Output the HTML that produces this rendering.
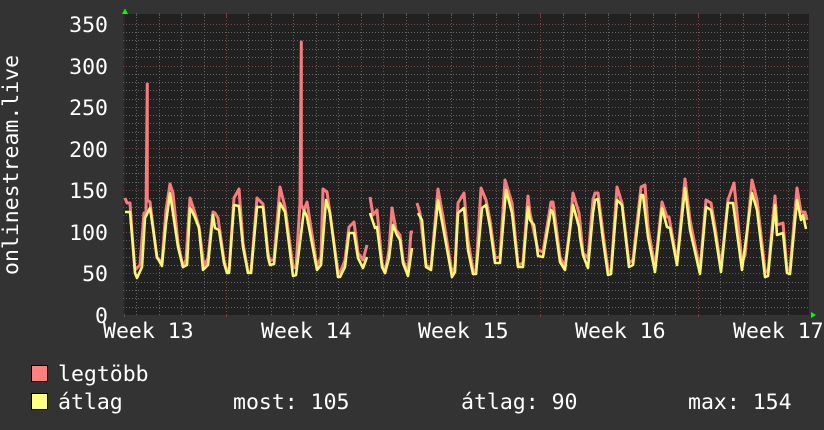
<!DOCTYPE html>
<html><head><meta charset="utf-8">
<style>
html,body{margin:0;padding:0;background:#333;width:824px;height:430px;overflow:hidden}
svg{display:block}
text{font-family:"DejaVu Sans Mono","Liberation Mono",monospace;font-size:21.5px;fill:#fff}
</style></head>
<body>
<svg width="824" height="430" viewBox="0 0 824 430" xmlns="http://www.w3.org/2000/svg">
<rect width="824" height="430" fill="#333"/>
<rect x="123" y="14" width="686" height="301" fill="#212121"/>
<rect x="123" y="14" width="2" height="301" fill="#2a2a2a"/>
<path fill="none" stroke="#646464" stroke-width="1" stroke-dasharray="1 2" d="M136.5 14V315M159.5 14V315M181.5 14V315M204.5 14V315M248.5 14V315M271.5 14V315M293.5 14V315M316.5 14V315M338.5 14V315M361.5 14V315M406.5 14V315M428.5 14V315M451.5 14V315M473.5 14V315M496.5 14V315M518.5 14V315M563.5 14V315M585.5 14V315M608.5 14V315M630.5 14V315M653.5 14V315M675.5 14V315M720.5 14V315M743.5 14V315M765.5 14V315M788.5 14V315"/>
<path fill="none" stroke="#646464" stroke-width="1" stroke-dasharray="1 2" d="M123 307.5H809M123 298.5H809M123 290.5H809M123 282.5H809M123 265.5H809M123 257.5H809M123 248.5H809M123 240.5H809M123 223.5H809M123 215.5H809M123 207.5H809M123 198.5H809M123 182.5H809M123 173.5H809M123 165.5H809M123 157.5H809M123 140.5H809M123 132.5H809M123 123.5H809M123 115.5H809M123 99.5H809M123 90.5H809M123 82.5H809M123 74.5H809M123 57.5H809M123 49.5H809M123 40.5H809M123 32.5H809"/>
<path fill="none" stroke="#7c4646" stroke-width="1" stroke-dasharray="1 2" d="M226.5 14V315M383.5 14V315M540.5 14V315M698.5 14V315M123 273.5H809M123 232.5H809M123 190.5H809M123 148.5H809M123 107.5H809M123 66.5H809M123 24.5H809"/>
<path fill="none" stroke="#555" d="M136.5 13V16M159.5 13V16M181.5 13V16M204.5 13V16M248.5 13V16M271.5 13V16M293.5 13V16M316.5 13V16M338.5 13V16M361.5 13V16M406.5 13V16M428.5 13V16M451.5 13V16M473.5 13V16M496.5 13V16M518.5 13V16M563.5 13V16M585.5 13V16M608.5 13V16M630.5 13V16M653.5 13V16M675.5 13V16M720.5 13V16M743.5 13V16M765.5 13V16M788.5 13V16M124.5 314V317"/>
<path fill="none" stroke="#7a3c3c" d="M226.5 13V17M383.5 13V17M540.5 13V17M698.5 13V17M226.5 314V317M383.5 314V317M540.5 314V317M698.5 314V317"/>

<g fill="none" stroke="#f97c7c" stroke-width="3" stroke-linejoin="round" stroke-linecap="butt">
<polyline points="125,198 127,203 130,203 132.5,240 135,270 140,265 144,213 146,213 147.3,84 147.3,200 150,202 153,227 157,258 162,262 166,210 170,184 173,193 178,243 183,267 186,260 190,198 194,210 199,227 204,267 208,258 213,212 215,213 218,218 224,260 227,272 229,272 234,198 239,189 243,243 248,272 251,272 257,198 263,204 268,253 270,261 274,259 280,187 285,207 293,267 296,268 300,203 301.3,42 301.3,205 304,210 307,202 317,267 321,257 323,189 327,192 338,272 340,273 345,260 349,227 354,222 358,253 363,260 367,245"/>
<polyline points="370,197 373,215 377,210 382,263 385,273 389,250 392,208 396,230 400,235 403,260 408,273 411,232 413,232"/>
<polyline points="417,203 420,213 426,265 431,268 438,189 443,217 452,273 455,267 458,203 464,193 468,240 473,270 476,272 481,188 486,200 490,220 495,258 500,257 505,180 512,203 518,265 523,263 528,196 530,213 534,232 538,250 543,252 551,202 553,202 560,257 565,267 570,227 573,193 579,213 580,222 583,253 588,258 593,200 595,193 598,193 603,233 608,270 611,272 617,187 622,203 629,263 633,260 641,187 645,185 648,227 655,268 662,202 667,217 669,217 677,262 685,179 690,220 700,270 706,200 711,203 715,227 721,268 728,200 734,183 742,263 745,255 752,180 757,200 765,270 768,273 775,196 777,225 783,223 787,270 790,270 797,188 801,212 805,212 807,220"/>
</g>
<g fill="none" stroke="#f8f878" stroke-width="2.6" stroke-linejoin="round">
<polyline points="125,212 130,212 132.7,243 135,273 137,278 142,267 145,218 150,208 153,228 157,257 162,266 166,223 170,193 174,220 178,247 183,267 187,265 190,208 194,215 199,228 203,270 208,265 213,215 215,228 219,230 224,263 227,273 229,273 234,205 239,206 243,247 248,273 251,273 257,207 263,207 268,257 270,265 274,264 280,203 285,212 293,276 296,275 304,210 307,217 317,270 321,265 326,200 330,213 338,277 340,277 345,267 349,233 354,233 358,258 363,268 367,257"/>
<polyline points="370,213 375,228 377,227 382,267 385,273 389,258 393,225 397,235 400,240 403,263 408,276 412,248"/>
<polyline points="418,213 422,220 426,267 431,270 438,200 443,227 452,277 455,272 458,213 464,208 468,250 473,274 476,274 482,208 486,205 490,227 495,263 500,263 506,190 512,213 518,267 523,267 528,207 530,220 534,225 538,256 543,257 551,210 553,212 560,262 565,270 570,230 573,205 579,227 580,237 583,255 588,268 593,213 595,200 598,199 603,240 608,275 611,274 617,200 622,205 629,267 633,265 641,195 643,195 648,237 655,272 662,208 667,227 670,228 677,265 685,188 690,230 700,274 706,207 711,210 715,233 721,272 728,203 733,203 742,270 752,193 757,210 765,277 768,276 775,205 777,235 783,233 787,273 790,274 797,200 801,220 803,215 806,229"/>
</g>

<polygon points="122,14 125,8.5 128,14" fill="#0f0"/>
<polygon points="811,312 816,315 811,318" fill="#0f0"/>

<g text-anchor="end">
<text x="108" y="32">350</text>
<text x="108" y="74">300</text>
<text x="108" y="115">250</text>
<text x="108" y="157">200</text>
<text x="108" y="198">150</text>
<text x="108" y="240">100</text>
<text x="108" y="281">50</text>
<text x="108" y="323">0</text>
</g>
<text x="103" y="338">Week 13</text>
<text x="261" y="338">Week 14</text>
<text x="418" y="338">Week 15</text>
<text x="575" y="338">Week 16</text>
<text x="733" y="338">Week 17</text>
<text transform="translate(18 275) rotate(-90)" x="0" y="0">onlinestream.live</text>

<rect x="31.5" y="365.5" width="16" height="16" fill="#ff8080" stroke="#000"/>
<rect x="31.5" y="393.5" width="16" height="16" fill="#ffff80" stroke="#000"/>
<text x="58" y="381">legtöbb</text>
<text x="58" y="409">átlag</text>
<text x="233" y="409">most: 105</text>
<text x="461" y="409">átlag: 90</text>
<text x="688" y="409">max: 154</text>
</svg>
</body></html>
